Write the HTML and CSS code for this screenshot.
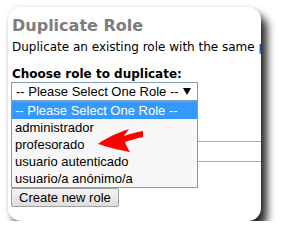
FILE: index.html
```html
<!DOCTYPE html>
<html>
<head>
<meta charset="utf-8">
<link rel="stylesheet" href="styles.css">
</head>
<body>
<div class="card">
  <h1 class="title">Duplicate Role</h1>
  <p class="desc">Duplicate an existing role with the same <a class="link" href="#">permissions</a>.</p>
  <label class="label">Choose role to duplicate:</label>
  <div class="select">
    <span class="select-text">-- Please Select One Role --</span>
    <svg class="select-arrow" width="8" height="7" viewBox="0 0 8 7"><path d="M0 0H8L4 7Z" fill="#000"/></svg>
  </div>
  <div class="behind">
    <div class="row-line"></div>
    <div class="row-line"></div>
  </div>
  <button class="btn">Create new role</button>

  <ul class="popup">
    <li class="opt opt-selected">-- Please Select One Role --</li>
    <li class="opt">administrador</li>
    <li class="opt">profesorado</li>
    <li class="opt">usuario autenticado</li>
    <li class="opt">usuario/a anónimo/a</li>
  </ul>

  <svg class="arrow" width="48" height="30" viewBox="0 0 48 30">
    <path d="M1 16 C9 10 20 5 32 1 C30 4 28 6 27 8 C33 6 39 4 46 3 L46 9 C40 10 34 12 28 14 C29 17 31 21 33 24 C22 22 10 19 1 16 Z" fill="#f00"/>
  </svg>
</div>
</body>
</html>
```

FILE: styles.css
```css
html, body {
  margin: 0;
  padding: 0;
  background: #fff;
}

body {
  padding: 7px 0 0 8px;
}

.card {
  position: relative;
  box-sizing: border-box;
  width: 253px;
  height: 214px;
  padding: 9px 0 0 3px;
  background: #fff;
  border-radius: 13px;
  overflow: hidden;
  box-shadow: 6px 8px 8px rgba(0, 0, 0, 0.85), 0 0 4px rgba(0, 0, 0, 0.12);
  font-family: "DejaVu Sans", Verdana, sans-serif;
}

.title {
  margin: 0 0 5px 1px;
  font-size: 16px;
  line-height: 19px;
  font-weight: bold;
  color: #7d7d7d;
}

.desc {
  margin: 0 0 13px 1px;
  font-size: 12px;
  line-height: 14px;
  color: #000;
  white-space: nowrap;
}

.link {
  color: #00309c;
  text-decoration: none;
}

.label {
  display: block;
  margin: 0 0 1px 1px;
  font-size: 12px;
  line-height: 14px;
  font-weight: bold;
  color: #000;
}

.select {
  box-sizing: border-box;
  display: flex;
  align-items: center;
  justify-content: space-between;
  width: 187px;
  height: 19px;
  padding: 0 6px 0 4px;
  border: 1px solid #7f9db9;
  background: #fff;
  font-family: "Liberation Sans", Arial, sans-serif;
  font-size: 13px;
  color: #000;
}

.behind {
  display: flex;
  flex-direction: column;
  height: 87px;
  padding-top: 40px;
  box-sizing: border-box;
  gap: 19px;
}

.row-line {
  height: 1px;
  background: #a9a9a9;
}

.btn {
  display: block;
  box-sizing: border-box;
  height: 19px;
  padding: 0 7px;
  margin: 0;
  border: 1px solid #a0a0a0;
  border-radius: 2px;
  background: linear-gradient(#f4f4f4, #dedede);
  font-family: "Liberation Sans", Arial, sans-serif;
  font-size: 13px;
  line-height: 17px;
  color: #000;
}

.popup {
  position: absolute;
  left: 3px;
  top: 94px;
  box-sizing: border-box;
  width: 187px;
  margin: 0;
  padding: 0;
  list-style: none;
  border: 1px solid #7f9db9;
  background: #f7f7f7;
  font-family: "Liberation Sans", Arial, sans-serif;
  font-size: 13px;
}

.opt {
  height: 17px;
  line-height: 17px;
  padding-left: 3px;
  color: #000;
  white-space: nowrap;
}

.opt-selected {
  background: #3399ff;
  color: #fff;
}

.arrow {
  position: absolute;
  left: 89px;
  top: 121px;
}
```
